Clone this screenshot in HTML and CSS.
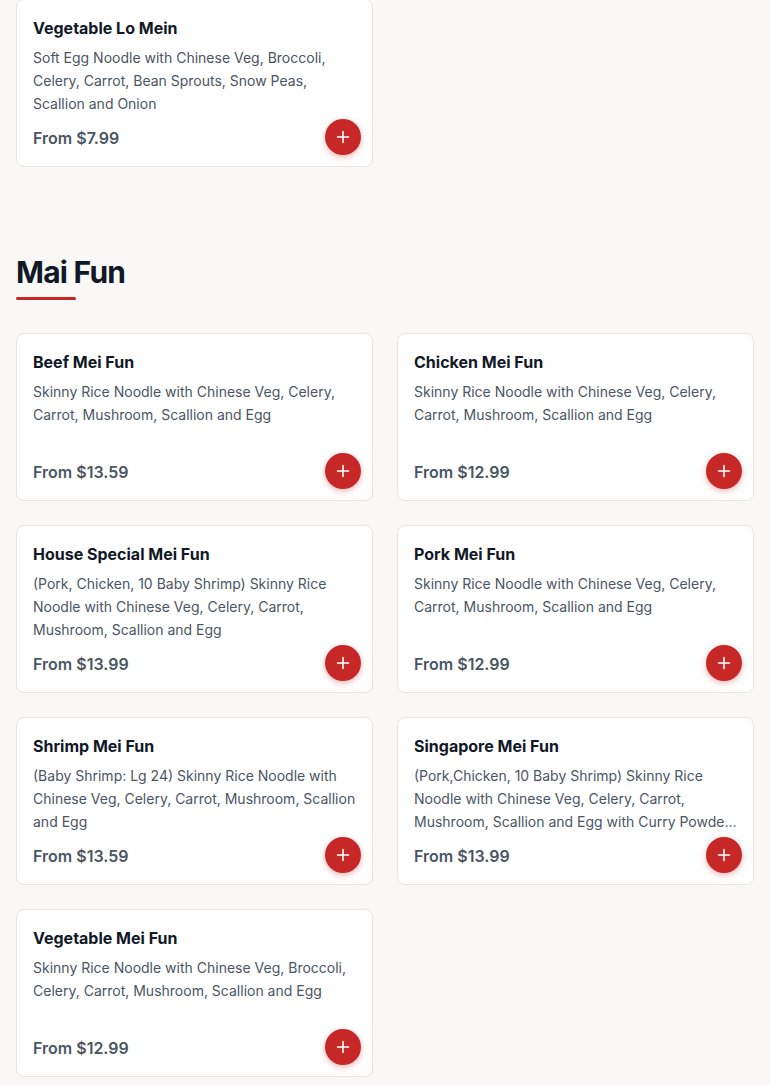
FILE: index.html
```html
<!DOCTYPE html>
<html lang="en">
<head>
<meta charset="utf-8">
<title>Menu</title>
<link rel="stylesheet" href="styles.css">
</head>
<body>
<main class="menu">
  <section class="section section-prev">
    <div class="grid">
      <article class="card">
        <h3 class="card-title">Vegetable Lo Mein</h3>
        <p class="card-desc">Soft Egg Noodle with Chinese Veg, Broccoli, Celery, Carrot, Bean Sprouts, Snow Peas, Scallion and Onion</p>
        <div class="card-price">From $7.99</div>
        <button class="add-btn" aria-label="Add"><svg viewBox="0 0 16 16" width="16" height="16"><path d="M8 2.5v11M2.5 8h11" stroke="#fff" stroke-width="1.6" stroke-linecap="round" fill="none"/></svg></button>
      </article>
    </div>
  </section>

  <section class="section">
    <h2 class="section-title">Mai Fun</h2>
    <div class="section-rule"></div>
    <div class="grid">
      <article class="card">
        <h3 class="card-title">Beef Mei Fun</h3>
        <p class="card-desc">Skinny Rice Noodle with Chinese Veg, Celery, Carrot, Mushroom, Scallion and Egg</p>
        <div class="card-price">From $13.59</div>
        <button class="add-btn" aria-label="Add"><svg viewBox="0 0 16 16" width="16" height="16"><path d="M8 2.5v11M2.5 8h11" stroke="#fff" stroke-width="1.6" stroke-linecap="round" fill="none"/></svg></button>
      </article>
      <article class="card">
        <h3 class="card-title">Chicken Mei Fun</h3>
        <p class="card-desc">Skinny Rice Noodle with Chinese Veg, Celery, Carrot, Mushroom, Scallion and Egg</p>
        <div class="card-price">From $12.99</div>
        <button class="add-btn" aria-label="Add"><svg viewBox="0 0 16 16" width="16" height="16"><path d="M8 2.5v11M2.5 8h11" stroke="#fff" stroke-width="1.6" stroke-linecap="round" fill="none"/></svg></button>
      </article>
      <article class="card">
        <h3 class="card-title">House Special Mei Fun</h3>
        <p class="card-desc">(Pork, Chicken, 10 Baby Shrimp) Skinny Rice Noodle with Chinese Veg, Celery, Carrot, Mushroom, Scallion and Egg</p>
        <div class="card-price">From $13.99</div>
        <button class="add-btn" aria-label="Add"><svg viewBox="0 0 16 16" width="16" height="16"><path d="M8 2.5v11M2.5 8h11" stroke="#fff" stroke-width="1.6" stroke-linecap="round" fill="none"/></svg></button>
      </article>
      <article class="card">
        <h3 class="card-title">Pork Mei Fun</h3>
        <p class="card-desc">Skinny Rice Noodle with Chinese Veg, Celery, Carrot, Mushroom, Scallion and Egg</p>
        <div class="card-price">From $12.99</div>
        <button class="add-btn" aria-label="Add"><svg viewBox="0 0 16 16" width="16" height="16"><path d="M8 2.5v11M2.5 8h11" stroke="#fff" stroke-width="1.6" stroke-linecap="round" fill="none"/></svg></button>
      </article>
      <article class="card">
        <h3 class="card-title">Shrimp Mei Fun</h3>
        <p class="card-desc">(Baby Shrimp: Lg 24) Skinny Rice Noodle with Chinese Veg, Celery, Carrot, Mushroom, Scallion and Egg</p>
        <div class="card-price">From $13.59</div>
        <button class="add-btn" aria-label="Add"><svg viewBox="0 0 16 16" width="16" height="16"><path d="M8 2.5v11M2.5 8h11" stroke="#fff" stroke-width="1.6" stroke-linecap="round" fill="none"/></svg></button>
      </article>
      <article class="card">
        <h3 class="card-title">Singapore Mei Fun</h3>
        <p class="card-desc">(Pork,Chicken, 10 Baby Shrimp) Skinny Rice Noodle with Chinese Veg, Celery, Carrot, Mushroom, Scallion and Egg with Curry Powder (Spicy)</p>
        <div class="card-price">From $13.99</div>
        <button class="add-btn" aria-label="Add"><svg viewBox="0 0 16 16" width="16" height="16"><path d="M8 2.5v11M2.5 8h11" stroke="#fff" stroke-width="1.6" stroke-linecap="round" fill="none"/></svg></button>
      </article>
      <article class="card">
        <h3 class="card-title">Vegetable Mei Fun</h3>
        <p class="card-desc">Skinny Rice Noodle with Chinese Veg, Broccoli, Celery, Carrot, Mushroom, Scallion and Egg</p>
        <div class="card-price">From $12.99</div>
        <button class="add-btn" aria-label="Add"><svg viewBox="0 0 16 16" width="16" height="16"><path d="M8 2.5v11M2.5 8h11" stroke="#fff" stroke-width="1.6" stroke-linecap="round" fill="none"/></svg></button>
      </article>
    </div>
  </section>
</main>
</body>
</html>
```

FILE: styles.css
```css
* { box-sizing: border-box; }

html, body {
  margin: 0;
  padding: 0;
  background: #f9f8f6;
}

body {
  font-family: Inter, "Noto Sans", "Liberation Sans", sans-serif;
  color: #111827;
}

.menu {
  padding: 0 16px;
  margin-top: -1px;
}

.section + .section {
  margin-top: 87px;
}

.section-title {
  margin: 0;
  font-size: 30px;
  line-height: 36px;
  font-weight: 700;
  color: #111827;
  letter-spacing: -0.75px;
}

.section-rule {
  width: 60px;
  height: 3px;
  border-radius: 2px;
  background: #c62828;
  margin-top: 7px;
  margin-bottom: 33px;
}

.grid {
  display: grid;
  grid-template-columns: 1fr 1fr;
  gap: 24px;
}

.card {
  position: relative;
  background: #ffffff;
  border: 1px solid #e7e5e2;
  border-radius: 8px;
  padding: 16px;
  display: flex;
  flex-direction: column;
}

.card-title {
  margin: 0;
  font-size: 16px;
  line-height: 24px;
  font-weight: 700;
  color: #111827;
}

.card-desc {
  margin: 7px 0 0;
  font-size: 14px;
  line-height: 22.75px;
  color: #4b5563;
  min-height: 68.25px;
  display: -webkit-box;
  -webkit-line-clamp: 3;
  -webkit-box-orient: vertical;
  overflow: hidden;
}

.card-price {
  margin-top: 10.75px;
  font-size: 16px;
  line-height: 24px;
  font-weight: 600;
  color: #4b5563;
}

.add-btn {
  position: absolute;
  right: 11px;
  bottom: 11px;
  width: 36px;
  height: 36px;
  border: none;
  border-radius: 50%;
  background: #c62828;
  box-shadow: 0 2px 6px rgba(198, 40, 40, 0.35);
  display: flex;
  align-items: center;
  justify-content: center;
  padding: 0;
  cursor: pointer;
}
```
